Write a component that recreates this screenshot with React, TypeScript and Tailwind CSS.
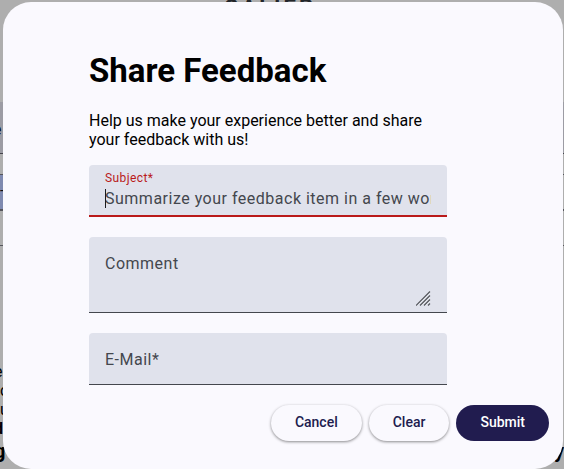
import { useEffect, useRef, useState } from "react";

function PageBehind() {
  return (
    <div aria-hidden="true" className="min-h-screen bg-[#aeaeae] text-[#101014]">
      <header className="flex h-[102px] justify-center overflow-hidden pr-6 text-[22px] leading-4 font-bold tracking-[3px] text-[#22252a]">
        <span>CALIER</span>
      </header>
      <div className="h-[52px] overflow-hidden border-b border-[#44444c] bg-[#9c9ca4]">
        <div className="-ml-[7px] pt-4 text-base">e</div>
      </div>
      <div className="h-5" />
      <div className="h-[37px] border-t border-b-2 border-[#55555c]">
        <div className="h-full w-1/2 bg-[#7f8ab0] text-base leading-8">-</div>
      </div>
      <div className="h-[35px] border-b border-[#55555c]" />
      <div className="flex h-[223px] flex-col justify-end overflow-hidden text-base leading-[19px] text-black">
        <div className="-ml-[6px]">e</div>
        <div>c</div>
        <div>u</div>
        <div className="-ml-[6px] font-bold">d</div>
        <div className="-ml-[6px] flex justify-between pt-[3px] pb-2 text-xl leading-[20px] font-bold">
          <span>g</span>
          <span>y</span>
        </div>
      </div>
    </div>
  );
}

export default function App() {
  const subject = useRef<HTMLInputElement>(null);
  const [open] = useState(true);
  const [value, setValue] = useState("");

  useEffect(() => {
    subject.current?.focus();
  }, []);

  return (
    <div className="relative min-h-screen overflow-hidden font-['Roboto',sans-serif]">
      <PageBehind />
      {open && (
        <div className="absolute inset-0 flex items-start justify-end pt-[2px] pr-px pl-[3px]">
          <section
            role="dialog"
            aria-labelledby="feedback-title"
            className="w-full max-w-[560px] rounded-[28px] bg-[#faf9fe] text-black"
          >
            <form>
              <div className="px-[86px] pt-12">
                <h1 id="feedback-title" className="text-[33px] leading-[42px] font-bold">
                  Share Feedback
                </h1>
                <p className="max-w-[358px] pt-[19px] text-base leading-[19px]">
                  Help us make your experience better and share your feedback with us!
                </p>
                <div className="mt-4 flex max-w-[358px] flex-col gap-5">
                  <div className="relative h-[52px] rounded-t border-b-2 border-[#ba1a1a] bg-[#e0e2ec] px-4 pt-[6px]">
                    <label htmlFor="subject" className="block text-xs leading-[14px] tracking-[0.4px] text-[#ba1a1a]">
                      Subject*
                    </label>
                    <input
                      id="subject"
                      ref={subject}
                      value={value}
                      onChange={(event) => setValue(event.target.value)}
                      placeholder="Summarize your feedback item in a few words"
                      className="block h-[26px] w-full text-base tracking-[0.5px] text-[#1a1b1f] outline-none placeholder:text-[#44474e]"
                    />
                    {value === "" && <span className="pointer-events-none absolute top-6 left-4 h-[19px] w-px bg-[#1a1b1f]" />}
                  </div>
                  <div className="relative h-[76px] rounded-t border-b border-[#44474e] bg-[#e0e2ec] px-4 pt-[15px]">
                    <label htmlFor="comment" className="sr-only">Comment</label>
                    <textarea
                      id="comment"
                      placeholder="Comment"
                      className="block h-14 w-full resize-none text-base leading-6 tracking-[0.5px] outline-none placeholder:text-[#44474e]"
                    />
                    <svg viewBox="0 0 15 15" className="pointer-events-none absolute right-4 bottom-[6px] size-[15px]" fill="none">
                      <path d="M0 14.5 14 .5M4 14.5l10-10M8 14.5l6-6M12 14.5l2-2" stroke="#55575d" strokeWidth="1.2" />
                      <path d="M1.5 14.5l12.5-12.5M5.500 14.500l8.500-8.500M9.500 14.500l4.500-4.500" stroke="#fff" strokeOpacity=".5" strokeWidth=".6" />
                    </svg>
                  </div>
                  <div className="h-[52px] rounded-t border-b border-[#44474e] bg-[#e0e2ec] px-4">
                    <label htmlFor="email" className="sr-only">E-Mail</label>
                    <input
                      id="email"
                      placeholder="E-Mail*"
                      className="block h-[51px] w-full pt-[2px] text-base tracking-[0.5px] outline-none placeholder:text-[#44474e]"
                    />
                  </div>
                </div>
              </div>
              <div className="flex justify-end gap-[7px] pt-5 pr-[14px] pb-7 text-sm font-medium text-[#211c4f]">
                <button type="button" className="h-9 rounded-full px-6 pb-[2px] shadow-[0_1px_3px_rgba(0,0,0,0.45)]">Cancel</button>
                <button type="reset" onClick={() => setValue("")} className="h-9 rounded-full px-6 pb-[2px] shadow-[0_1px_3px_rgba(0,0,0,0.45)]">Clear</button>
                <button type="submit" className="h-9 rounded-full bg-[#211c4f] px-6 pb-[2px] text-white">Submit</button>
              </div>
            </form>
          </section>
        </div>
      )}
    </div>
  );
}
